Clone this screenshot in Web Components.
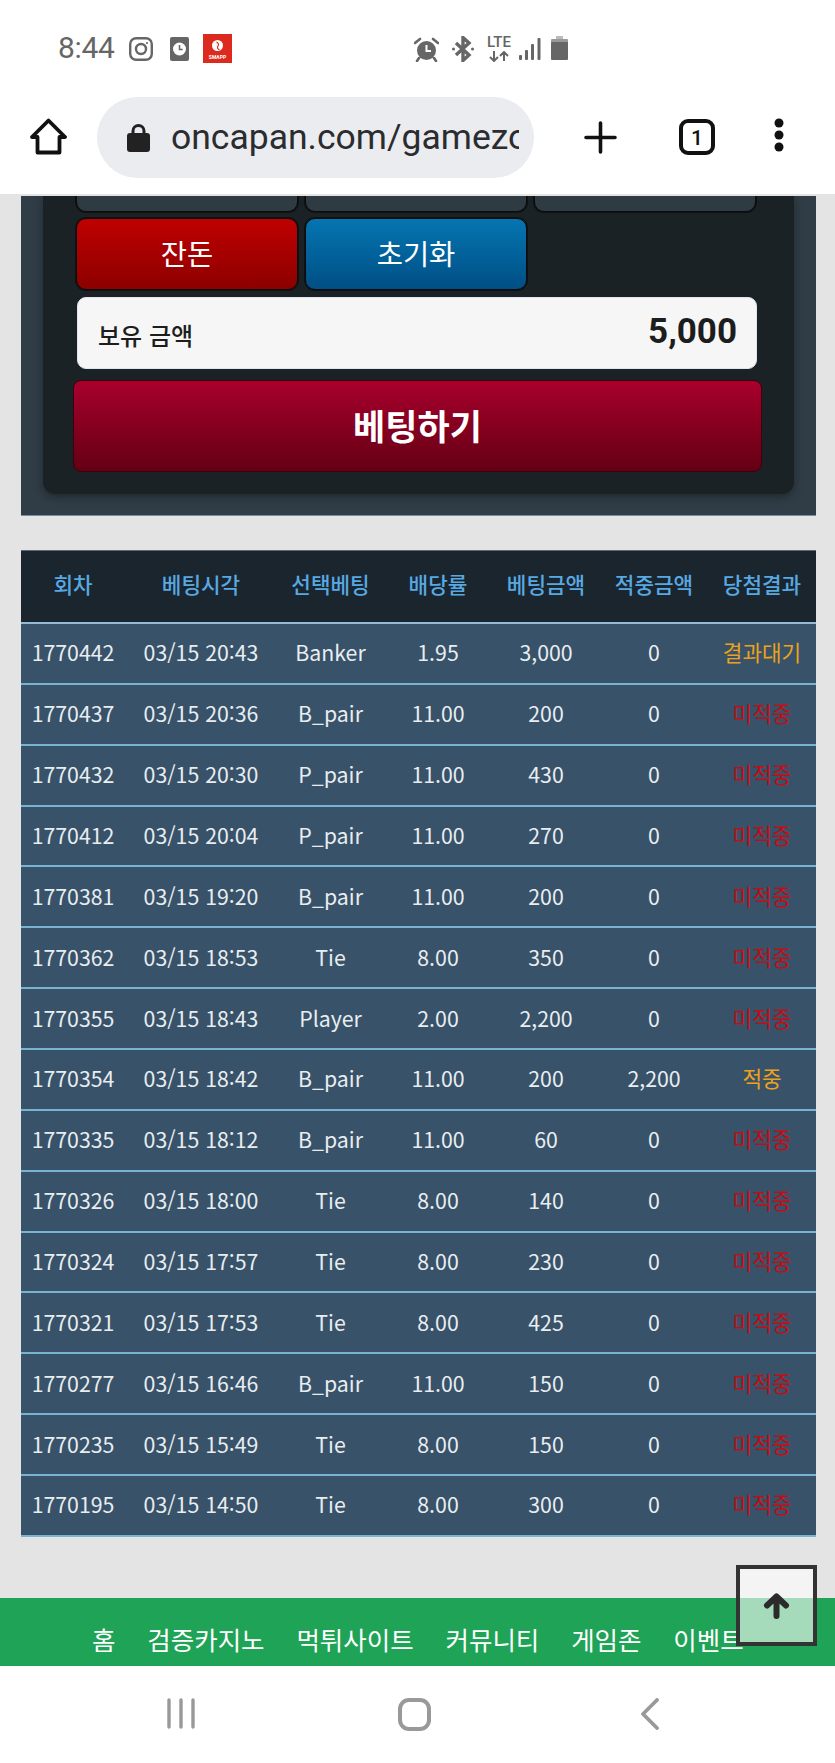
<!DOCTYPE html>
<html lang="ko">
<head>
<meta charset="utf-8">
<title>oncapan</title>
<style>
  html, body { margin: 0; padding: 0; background: #fff; }
  body { position: relative; width: 835px; height: 1763px; overflow: hidden; font-family: "Noto Sans CJK KR", "Noto Sans", sans-serif; }
  main { display: block; height: 1404px; background: #e4e4e4; box-sizing: border-box; padding: 2px 19px 0 21px; }
</style>
</head>
<body>
<status-bar></status-bar>
<browser-bar url="oncapan.com/gamezone"></browser-bar>
<main>
  <bet-panel>
    <bet-button></bet-button>
    <bet-button></bet-button>
    <bet-button></bet-button>
    <bet-button kind="red">잔돈</bet-button>
    <bet-button kind="blue">초기화</bet-button>
  </bet-panel>
  <history-table></history-table>
</main>
<site-footer></site-footer>
<nav-bar></nav-bar>
<top-button></top-button>

<script>
class statusBar extends HTMLElement {
  constructor() {
    super();
    this.attachShadow({ mode: 'open' });
    this.shadowRoot.innerHTML = `
      <style>
        :host { display: flex; height: 80px; padding: 34px 0 0 58px; box-sizing: border-box; align-items: flex-start; background: #fff; color: #666; font-family: Roboto, sans-serif; }
        .time { font-size: 30px; line-height: 30px; width: 57px; margin-top: -1px; letter-spacing: -0.3px; }
        svg { display: block; flex: none; }
        .left { display: flex; }
        .right { display: flex; margin-left: 182px; }
        .lte { width: 24px; margin-left: 13px; margin-top: 2px; display: flex; flex-direction: column; align-items: center; }
        .lte span { font-size: 15px; line-height: 12px; font-weight: 500; letter-spacing: 0; }
      </style>
      <div class="left">
        <div class="time">8:44</div>
        <svg style="margin:3px 0 0 14px" width="24" height="24" viewBox="0 0 24 24" fill="none" stroke="#666" stroke-width="2.4"><rect x="1.2" y="1.2" width="21.6" height="21.6" rx="6"/><circle cx="12" cy="12" r="5"/><circle cx="18" cy="6" r="1.1" fill="#666" stroke="none"/></svg>
        <svg style="margin:3px 0 0 17px" width="19" height="24" viewBox="0 0 19 24"><rect width="19" height="24" rx="2" fill="#666"/><circle cx="9.5" cy="12" r="6.5" fill="#fff"/><path d="M9.5 8v4.4h3.2" fill="none" stroke="#666" stroke-width="1.5"/></svg>
        <svg style="margin:0 0 0 14px" width="29" height="29" viewBox="0 0 29 29"><rect width="29" height="29" fill="#dc2a1e"/><circle cx="14.5" cy="11.5" r="5.500" fill="#fff"/><path d="M13.500 8c2 1 2.500 3 1.500 4s-.5 3 1.500 4" fill="none" stroke="#dc2a1e" stroke-width="1.100"/><text x="14.5" y="24.500" font-size="5" font-weight="700" fill="#fff" text-anchor="middle" font-family="Roboto, sans-serif">SMAPP</text></svg>
      </div>
      <div class="right">
        <svg style="margin-top:3px" width="25" height="25" viewBox="0 0 25 25"><circle cx="12.500" cy="13.500" r="9.500" fill="#666"/><path d="M12.500 8v6h4.500" fill="none" stroke="#fff" stroke-width="2"/><path d="M1 6l5-4M24 6l-5-4M5 21l-2 3M20 21l2 3" stroke="#666" stroke-width="2.600" stroke-linecap="round"/></svg>
        <svg style="margin:2px 0 0 13px" width="22" height="26" viewBox="0 0 22 26" fill="none" stroke="#666" stroke-width="3.400"><path d="M4 7l13 12-6 5.500V1.500L17 7 4 19"/><circle cx="1.500" cy="13" r="1.500" fill="#666" stroke="none"/><circle cx="20.500" cy="13" r="1.500" fill="#666" stroke="none"/></svg>
        <div class="lte"><span>LTE</span>
          <svg style="margin-top:3px" width="22" height="11" viewBox="0 0 22 11" fill="none" stroke="#666" stroke-width="2"><path d="M6 0v9M2 6l4 4 4-4M16 10V1M12 5l4-4 4 4"/></svg>
        </div>
        <svg style="margin:3px 0 0 8px" width="22" height="24" viewBox="0 0 22 24" fill="#666"><rect x="0" y="18" width="3" height="5" rx="1"/><rect x="6" y="13" width="3" height="10" rx="1"/><rect x="12" y="7" width="3" height="16" rx="1"/><rect x="18.500" y="1" width="3" height="22" rx="1"/></svg>
        <svg style="margin:2px 0 0 10px" width="17" height="25" viewBox="0 0 17 25"><rect x="5" y="0" width="7" height="4" fill="#bbb"/><rect x="0" y="3" width="17" height="5" rx="1" fill="#999"/><rect x="0" y="6" width="17" height="18" rx="1" fill="#666"/></svg>
      </div>`;
  }
}

class browserBar extends HTMLElement {
  constructor() {
    super();
    this.attachShadow({ mode: 'open' });
  }

  connectedCallback() {
    this.shadowRoot.innerHTML = `
      <style>
        :host { display: flex; height: 114px; box-sizing: border-box; padding: 17px 0 0 30px; align-items: flex-start; background: #fff; color: #222; font-family: Roboto, sans-serif; }
        svg { display: block; flex: none; }
        .pill { width: 437px; height: 81px; margin: 0 50px 0 30px; box-sizing: border-box; padding: 0 15px 0 30px; flex: none; display: flex; align-items: center; background: #ebecf0; border-radius: 41px; }
        .url { margin-left: 21px; font-size: 35.500px; line-height: 81px; height: 81px; white-space: nowrap; overflow: hidden; flex: 1; min-width: 0; color: #2a2c2f; }
      </style>
      <svg style="margin-top:21px" width="37" height="37" viewBox="0 0 37 37" fill="none" stroke="#111" stroke-width="3.800" stroke-linejoin="round" stroke-linecap="round"><path d="M2 19L18.500 2.500 35 19h-5.500v15.500h-22V19z"/></svg>
      <div class="pill">
        <svg width="23" height="29" viewBox="0 0 23 29"><path d="M6 12V8a5.500 5.500 0 0 1 11 0v4" fill="none" stroke="#222" stroke-width="3"/><rect x="0" y="10" width="23" height="19" rx="3" fill="#222"/></svg>
        <div class="url">${this.getAttribute('url')}</div>
      </div>
      <svg style="margin-top:24px" width="33" height="33" viewBox="0 0 33 33" stroke="#111" stroke-width="3.600" stroke-linecap="round"><path d="M16.500 2v29M2 16.500h29"/></svg>
      <svg style="margin:22px 0 0 62px" width="36" height="36" viewBox="0 0 36 36"><rect x="2" y="2" width="32" height="32" rx="7" fill="none" stroke="#111" stroke-width="4"/><text x="18" y="25.500" font-size="21" font-weight="500" font-family="Roboto, sans-serif" fill="#111" text-anchor="middle">1</text></svg>
      <svg style="margin:21px 0 0 59px" width="10" height="34" viewBox="0 0 10 34" fill="#111"><circle cx="5" cy="5" r="4.500"/><circle cx="5" cy="17" r="4.500"/><circle cx="5" cy="29" r="4.500"/></svg>`;
  }
}

class betButton extends HTMLElement {
  constructor() {
    super();
    this.attachShadow({ mode: 'open' });
    this.shadowRoot.innerHTML = `
      <style>
        :host { display: flex; align-items: center; justify-content: center; height: 72px; box-sizing: border-box; border: 1px solid #0a0d0f; border-radius: 10px; background: #2f3b43; color: #fff; font-size: 28.500px; padding-bottom: 4px; box-shadow: 0 0 0 1px #111; }
        :host([kind="red"]) { background: linear-gradient(#c00000, #8c0000); }
        :host([kind="blue"]) { background: linear-gradient(#0575b0, #004f85); }
      </style>
      <slot></slot>`;
  }
}

class betPanel extends HTMLElement {
  constructor() {
    super();
    this.attachShadow({ mode: 'open' });
    this.shadowRoot.innerHTML = `
      <style>
        :host { display: block; height: 320px; box-sizing: border-box; background: #303d46; padding: 0 22px; border-bottom: 1px solid #7c8c98; overflow: hidden; }
        .inner { height: 298px; box-sizing: border-box; background: #1b2226; border-radius: 0 0 12px 12px; padding: 0 30px 0 33px; box-shadow: 0 3px 8px rgba(0,0,0,.35); overflow: hidden; }
        .grid { display: grid; grid-template-columns: 222px 222px 222px; gap: 6px 7px; margin-top: -56px; }
        .balance { display: flex; align-items: center; justify-content: space-between; width: 680px; height: 72px; box-sizing: border-box; margin: 7px 0 0 1px; padding: 0 19px 0 20px; background: #f6f6f6; border-radius: 9px; border: 1px solid #dfe6f2; color: #1d1d1d; }
        .label { font-size: 24px; font-weight: 500; padding-top: 2px; }
        .value { font-family: Roboto, sans-serif; font-size: 35px; font-weight: 700; padding-bottom: 4px; }
        .submit { display: flex; align-items: center; justify-content: center; width: 689px; height: 92px; box-sizing: border-box; margin: 11px 0 0 -3px; padding-bottom: 4px; border-radius: 8px; background: linear-gradient(#a8002c, #640014); border: 1px solid #3d000c; color: #fff; font-size: 35px; font-weight: 700; }
      </style>
      <div class="inner">
        <div class="grid"><slot></slot></div>
        <div class="balance"><span class="label">보유 금액</span><span class="value">5,000</span></div>
        <div class="submit">베팅하기</div>
      </div>`;
  }
}

// 배팅 내역: [회차, 시각, 선택, 배당, 금액, 적중금액, 결과]
const HISTORY = [
  ['1770442', '03/15 20:43', 'Banker', '1.95', '3,000', '0', '결과대기'],
  ['1770437', '03/15 20:36', 'B_pair', '11.00', '200', '0', '미적중'],
  ['1770432', '03/15 20:30', 'P_pair', '11.00', '430', '0', '미적중'],
  ['1770412', '03/15 20:04', 'P_pair', '11.00', '270', '0', '미적중'],
  ['1770381', '03/15 19:20', 'B_pair', '11.00', '200', '0', '미적중'],
  ['1770362', '03/15 18:53', 'Tie', '8.00', '350', '0', '미적중'],
  ['1770355', '03/15 18:43', 'Player', '2.00', '2,200', '0', '미적중'],
  ['1770354', '03/15 18:42', 'B_pair', '11.00', '200', '2,200', '적중'],
  ['1770335', '03/15 18:12', 'B_pair', '11.00', '60', '0', '미적중'],
  ['1770326', '03/15 18:00', 'Tie', '8.00', '140', '0', '미적중'],
  ['1770324', '03/15 17:57', 'Tie', '8.00', '230', '0', '미적중'],
  ['1770321', '03/15 17:53', 'Tie', '8.00', '425', '0', '미적중'],
  ['1770277', '03/15 16:46', 'B_pair', '11.00', '150', '0', '미적중'],
  ['1770235', '03/15 15:49', 'Tie', '8.00', '150', '0', '미적중'],
  ['1770195', '03/15 14:50', 'Tie', '8.00', '300', '0', '미적중'],
];

class historyTable extends HTMLElement {
  constructor() {
    super();
    this.attachShadow({ mode: 'open' });
  }

  getStyle() {
    return `
    <style>
      :host { display: block; margin-top: 34px; font-size: 21.300px; color: #e9edf0; }
      .row { display: grid; grid-template-columns: 104px 152px 107px 108px 108px 108px 108px; align-items: center; text-align: center; height: 60.860px; box-sizing: border-box; background: #375269; border-bottom: 2px solid #79b3d2; white-space: nowrap; padding-bottom: 3px; }
      .head { height: 74px; background: #1a252e; color: #58a9e2; font-weight: 500; border-top: 1px solid #5d6a74; border-bottom-color: #93bcd4; padding-bottom: 6px; }
      .wait, .hit { color: #eda219; }
      .miss { color: #c30d14; }
    </style>`;
  }

  resultClass(text) {
    if (text === '적중') return 'hit';
    if (text === '결과대기') return 'wait';
    return 'miss';
  }

  connectedCallback() {
    const heads = ['회차', '베팅시각', '선택베팅', '배당률', '베팅금액', '적중금액', '당첨결과'];
    const rows = HISTORY.map((r) => `
      <div class="row">
        ${r.slice(0, 6).map((c) => `<span>${c}</span>`).join('')}
        <span class="${this.resultClass(r[6])}">${r[6]}</span>
      </div>`).join('');
    this.shadowRoot.innerHTML = `
      ${this.getStyle()}
      <div class="row head">${heads.map((h) => `<span>${h}</span>`).join('')}</div>
      ${rows}`;
  }
}

class siteFooter extends HTMLElement {
  constructor() {
    super();
    this.attachShadow({ mode: 'open' });
    this.shadowRoot.innerHTML = `
      <style>
        :host { display: flex; height: 68px; box-sizing: border-box; padding: 17px 0 0 92px; gap: 31.800px; background: #1fa356; color: #fff; font-size: 25.500px; line-height: 48px; white-space: nowrap; overflow: hidden; }
      </style>
      <span>홈</span><span>검증카지노</span><span>먹튀사이트</span><span>커뮤니티</span><span>게임존</span><span>이벤트</span>`;
  }
}

class navBar extends HTMLElement {
  constructor() {
    super();
    this.attachShadow({ mode: 'open' });
    this.shadowRoot.innerHTML = `
      <style>
        :host { display: flex; height: 97px; box-sizing: border-box; padding: 32px 0 0 167px; align-items: flex-start; background: #fff; }
        svg { display: block; flex: none; }
      </style>
      <svg width="28" height="31" viewBox="0 0 28 31" stroke="#999" stroke-width="3.400" stroke-linecap="round"><path d="M2 2v27M14 2v27M26 2v27"/></svg>
      <svg style="margin-left:203px" width="33" height="33" viewBox="0 0 33 33" fill="none" stroke="#999" stroke-width="4"><rect x="2" y="2" width="29" height="29" rx="9"/></svg>
      <svg style="margin-left:209px" width="20" height="32" viewBox="0 0 20 32" fill="none" stroke="#999" stroke-width="3.800" stroke-linecap="round" stroke-linejoin="round"><path d="M17 2L3 16l14 14"/></svg>`;
  }
}

class topButton extends HTMLElement {
  constructor() {
    super();
    this.attachShadow({ mode: 'open' });
    this.shadowRoot.innerHTML = `
      <style>
        :host { position: absolute; left: 736px; top: 1565px; width: 81px; height: 81px; box-sizing: border-box; border: 4px solid #333; background: rgba(255,255,255,.6); display: flex; align-items: center; justify-content: center; }
        svg { display: block; }
      </style>
      <svg width="27" height="26" viewBox="0 0 27 26" fill="none" stroke="#2b2b2b" stroke-width="6" stroke-linecap="round" stroke-linejoin="round"><path d="M13.500 23V4M4 12.500l9.500-9 9.500 9"/></svg>`;
  }
}

customElements.define('status-bar', statusBar);
customElements.define('browser-bar', browserBar);
customElements.define('bet-button', betButton);
customElements.define('bet-panel', betPanel);
customElements.define('history-table', historyTable);
customElements.define('site-footer', siteFooter);
customElements.define('nav-bar', navBar);
customElements.define('top-button', topButton);
</script>
</body>
</html>
